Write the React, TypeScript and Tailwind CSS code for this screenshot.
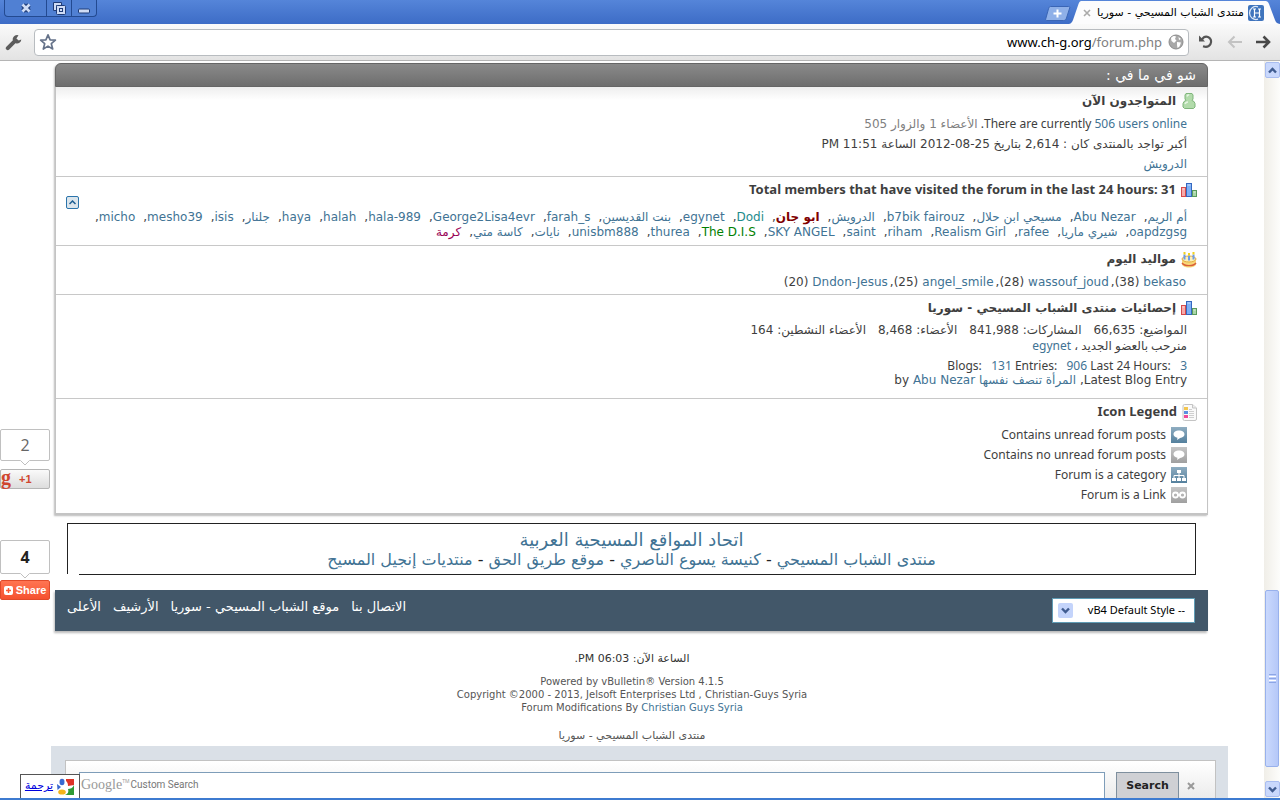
import type { ReactNode } from 'react'

type Member = { name: string; color?: string }

const membersTop: Member[] = [
  { name: 'أم الريم' },
  { name: 'Abu Nezar' },
  { name: 'مسيحي ابن حلال' },
  { name: 'b7bik fairouz' },
  { name: 'الدرويش' },
  { name: 'ابو جان', color: 'font-bold text-[#800000]' },
  { name: 'Dodi', color: 'text-[#1e8c8c]' },
  { name: 'egynet' },
  { name: 'بنت القديسين' },
  { name: 'farah_s' },
  { name: 'George2Lisa4evr' },
  { name: 'hala-989' },
  { name: 'halah' },
  { name: 'haya' },
  { name: 'جلنار' },
  { name: 'isis' },
  { name: 'mesho39' },
  { name: 'micho' },
]

const membersBottom: Member[] = [
  { name: 'oapdzgsg' },
  { name: 'شيري ماريا' },
  { name: 'rafee' },
  { name: 'Realism Girl' },
  { name: 'riham' },
  { name: 'saint' },
  { name: 'SKY ANGEL' },
  { name: 'The D.I.S', color: 'text-[#008000]' },
  { name: 'thurea' },
  { name: 'unisbm888' },
  { name: 'نايات' },
  { name: 'كاسة متي' },
  { name: 'كرمة', color: 'text-[#990055]' },
]

const birthdays = [
  { name: 'bekaso', age: 38 },
  { name: 'wassouf_joud', age: 28 },
  { name: 'angel_smile', age: 25 },
  { name: 'Dndon-Jesus', age: 20 },
]

function A({ children, className = 'text-[#417394]' }: { children: ReactNode; className?: string }) {
  return <a href="#" className={className}>{children}</a>
}

/* ---------- icons ---------- */

function UserIcon() {
  return (
    <svg width="16" height="18" viewBox="0 0 16 18">
      <path d="M5 1.500h6l1 1.500v4l-1 1.500 2 1 1 2v3.500l-1.500 1.500h-9L2 15v-3.500l1-2 2-1L4 7V3z" fill="#b2dbab" stroke="#7fb57b" strokeLinejoin="round" />
      <path d="M6 4.500c.3-1.200 1.200-1.700 2.200-1.700M4 12c.5-1.400 1.500-2 3-2" stroke="#e6f5e3" strokeWidth="1.500" fill="none" />
    </svg>
  )
}

function StatsIcon() {
  return (
    <svg width="16" height="16" viewBox="0 0 16 16">
      <rect x=".5" y="5.500" width="4" height="9" fill="#f6a9a9" stroke="#d64a4a" />
      <rect x="5.500" y="1.500" width="5" height="13" fill="#7db0f5" stroke="#3568c0" />
      <rect x="11.500" y="8.500" width="4" height="6" fill="#a9d6a7" stroke="#5a9a5c" />
      <path d="M1.500 7h2M6.500 3h3M12.500 10h2" stroke="#fff" strokeOpacity=".6" />
    </svg>
  )
}

function CakeIcon() {
  return (
    <svg width="16" height="17" viewBox="0 0 16 17">
      <path d="M1 8v5c0 2 3 3.500 7 3.500s7-1.500 7-3.500V8z" fill="#f8d878" />
      <ellipse cx="8" cy="8" rx="7" ry="3" fill="#fdf0b8" stroke="#e2ad45" />
      <path d="M1 12c1.500 2 4 2.600 7 2.600s5.500-.6 7-2.600" stroke="#d95f3a" strokeWidth="1.400" fill="none" />
      <path d="M3.500 3.500v5M8 4.500v5M12.500 3.500v5" stroke="#6d9be6" strokeWidth="2" />
      <path d="M3.500 1v2.500M8 2v2.500M12.500 1v2.500" stroke="#f3d21d" strokeWidth="2" />
    </svg>
  )
}

function LegendIcon() {
  return (
    <svg width="15" height="17" viewBox="0 0 15 17">
      <path d="M2.500 .5h8L14.500 4v11a1.500 1.500 0 0 1-1.500 1.500H2.500A1.500 1.500 0 0 1 1 15V2A1.500 1.500 0 0 1 2.500 .5z" fill="#fafafa" stroke="#c4c4c4" />
      <path d="M10.500 .5V4h4" fill="#eee" stroke="#c4c4c4" />
      <rect x="2" y="3" width="4" height="3" fill="#f3c64e" />
      <rect x="2" y="7" width="4" height="3" fill="#5a8fe0" />
      <rect x="2" y="11" width="4" height="3" fill="#ef4a9a" />
      <path d="M7 5.500h3M7 7.500h5M7 9.500h5M7 11.500h5M7 13.500h5" stroke="#cfcfcf" />
    </svg>
  )
}

function Tile({ blue, children }: { blue?: boolean; children: ReactNode }) {
  return (
    <svg width="16" height="16" viewBox="0 0 16 16" className={blue ? 'bg-linear-to-b from-[#8fadc1] to-[#54809d]' : 'bg-linear-to-b from-[#c6c6c6] to-[#a0a0a0]'}>
      {children}
    </svg>
  )
}

const bubble = <path d="M8 3.500c3 0 5.500 1.500 5.500 3.800 0 2.100-2 3.500-4.400 3.700L6 13l.5-2.200C4.200 10.300 2.500 9.100 2.500 7.300 2.500 5 5 3.500 8 3.500z" fill="#fff" />

const legend = [
  { label: 'Contains unread forum posts', icon: <Tile blue>{bubble}</Tile> },
  { label: 'Contains no unread forum posts', icon: <Tile>{bubble}</Tile> },
  {
    label: 'Forum is a category',
    icon: (
      <Tile blue>
        <path d="M6 3h4v3H6zM1 11h4v3H1zM6 11h4v3H6zM11 11h4v3h-4z" fill="#fff" />
        <path d="M8 6v5M3 11V8.500h10V11" stroke="#fff" fill="none" />
      </Tile>
    ),
  },
  {
    label: 'Forum is a Link',
    icon: (
      <Tile>
        <circle cx="4.500" cy="8" r="2.500" fill="none" stroke="#fff" strokeWidth="1.800" />
        <circle cx="11.500" cy="8" r="2.500" fill="none" stroke="#fff" strokeWidth="1.800" />
        <path d="M6.500 8h3" stroke="#fff" strokeWidth="1.500" />
      </Tile>
    ),
  },
]

/* ---------- browser window ---------- */

function TitleBar() {
  return (
    <div dir="ltr" className="flex h-6 items-start justify-between bg-linear-to-b from-[#5585d9] to-[#3d6cc6]">
      <div className="ml-1 flex h-[17px] rounded-b border border-t-0 border-[#234a91] bg-[#5080d3]">
        <button aria-label="Close window" className="flex w-[42px] items-center justify-center border-r border-[#234a91]">
          <svg width="12" height="12" viewBox="0 0 12 12">
            <path d="M3 3l6 6M9 3l-6 6" stroke="#1f3c78" strokeWidth="5" />
            <path d="M2.500 2.500l7 7M9.500 2.500l-7 7" stroke="#cfdcf5" strokeWidth="2.600" />
          </svg>
        </button>
        <button aria-label="Restore window" className="flex w-[25px] items-center justify-center border-r border-[#234a91]">
          <svg width="13" height="13" viewBox="0 0 13 13" fill="none">
            <path d="M.5 .5h8v3h-5v5h-3z" fill="#cfdcf5" stroke="#1f3c78" />
            <rect x="3.500" y="3.500" width="9" height="9" rx="1" fill="#cfdcf5" stroke="#1f3c78" />
            <rect x="6.500" y="6.500" width="3" height="3" fill="#cfdcf5" stroke="#1f3c78" />
          </svg>
        </button>
        <button aria-label="Minimize window" className="flex w-[24px] items-center justify-center">
          <svg width="12" height="12" viewBox="0 0 12 12">
            <rect x=".5" y="7" width="11" height="4" rx="1" fill="#cfdcf5" stroke="#1f3c78" />
          </svg>
        </button>
      </div>
      <div className="flex items-end">
        <button aria-label="New tab" className="-mr-0.5 mb-[3px]">
          <svg width="26" height="15" viewBox="0 0 26 15">
            <path d="M5.500 .5h18c1.200 0 1.500.6 1.200 1.500L21.500 12c-.5 1.700-1.300 2.500-3 2.500H2C.800 14.500.400 14 .700 13L3.500 2.800C4 1.200 4.500.5 5.500 .5z" fill="#8fb0e8" stroke="#3a65b5" />
            <path d="M12.500 3.500v8M8.500 7.500h8" stroke="#fff" strokeWidth="2" />
          </svg>
        </button>
        <div className="flex h-6 items-center">
          <svg width="14" height="24" viewBox="0 0 14 24" className="shrink-0">
            <path d="M0 24c2.500-.5 3-2 4-4L9.500 4C10.500 1.500 11 1 14 1v23z" fill="#fcfcfd" />
          </svg>
          <div className="mt-px flex h-[23px] items-center gap-1.5 bg-[#fcfcfd] font-['DejaVu_Sans',sans-serif]">
            <button aria-label="Close tab">
              <svg width="8" height="8" viewBox="0 0 8 8">
                <path d="M1 1l6 6M7 1L1 7" stroke="#aaa" strokeWidth="1.600" />
              </svg>
            </button>
            <span dir="rtl" className="text-[11px] leading-4 whitespace-nowrap text-black">منتدى الشباب المسيحي - سوريا</span>
            <svg width="16" height="16" viewBox="0 0 16 16" className="-ml-0.5">
              <rect width="16" height="16" rx="2" fill="#3f74bd" />
              <path d="M10 1.800A6.500 6.500 0 1 0 10 14.200" fill="none" stroke="#dbe7f7" strokeWidth="1.300" />
              <path d="M6.500 4v8M11.500 4v8M6.500 8h5M5 4h3M10 4h3M5 12h3M10 12h3" stroke="#fff" strokeWidth="1.200" />
            </svg>
          </div>
          <svg width="16" height="24" viewBox="0 0 16 24" className="shrink-0">
            <path d="M0 1c3 0 4 .5 5 3l6 16c.8 2.500 2 3.600 5 4H0z" fill="#fcfcfd" />
          </svg>
        </div>
      </div>
    </div>
  )
}

function Toolbar() {
  return (
    <div dir="ltr" className="flex h-[37px] items-center gap-3 border-b border-[#b5b5b5] bg-linear-to-b from-[#fafafa] to-[#e3e3e3] px-[5px]">
      <button aria-label="Settings">
        <svg width="17" height="17" viewBox="0 0 17 17">
          <path d="M2.800 14.200l6-6" stroke="#5c5c5c" strokeWidth="4" strokeLinecap="round" />
          <path d="M13.500 1.200a4.300 4.300 0 1 0 2.800 4.200l-2.600 1.200-2.300-2.200z" fill="#5c5c5c" />
        </svg>
      </button>
      <div className="flex h-[27px] flex-1 items-center rounded border border-[#b8bcc0] bg-white px-1">
        <button aria-label="Bookmark this page">
          <svg width="18" height="18" viewBox="0 0 18 18">
            <path d="M9 1.800l2.100 5 5.300.4-4.100 3.500 1.400 5.300L9 13.100 4.300 16l1.400-5.300L1.600 7.200l5.300-.4z" fill="#fff" stroke="#66738a" strokeWidth="1.700" strokeLinejoin="round" />
          </svg>
        </button>
        <div className="flex-1 text-right text-[13px] leading-5 text-[#808080]">
          <span className="text-black">www.ch-g.org</span>/forum.php
        </div>
        <svg width="16" height="16" viewBox="0 0 16 16" className="ml-[6px] shrink-0">
          <circle cx="8" cy="8" r="7" fill="#a8a8a8" stroke="#8c8c8c" />
          <path d="M3 4c2-2.500 4-2 5-1.500L7 5l1.500 1.500L6 9 3.500 7zM9 8l4 .5-1.500 4-2 1.500L9 11zM10.500 3l2.500 2-2 1z" fill="#fff" />
        </svg>
      </div>
      <button aria-label="Reload" className="-ml-1">
        <svg width="18" height="18" viewBox="0 0 18 18" fill="none">
          <path d="M5 6.500C6.500 4 9 3 11.500 4.200c2.500 1.300 3.300 4.300 2 6.800-1.300 2.400-4.200 3.300-7.500 2.300" stroke="#555" strokeWidth="2.200" />
          <path d="M2 2.500v6h6z" fill="#555" />
        </svg>
      </button>
      <button aria-label="Forward">
        <svg width="16" height="14" viewBox="0 0 16 14" fill="none" stroke="#c3c3c3" strokeWidth="2">
          <path d="M15 7H2M7.500 1.500L2 7l5.500 5.500" />
        </svg>
      </button>
      <button aria-label="Back" className="mr-1">
        <svg width="16" height="14" viewBox="0 0 16 14" fill="none" stroke="#484848" strokeWidth="2.600">
          <path d="M1 7h13M8.500 1.500L14 7l-5.500 5.500" />
        </svg>
      </button>
    </div>
  )
}

function Chevron({ up }: { up?: boolean }) {
  return (
    <svg width="9" height="7" viewBox="0 0 9 7" fill="none" stroke="#405c90" strokeWidth="2.400">
      <path d={up ? 'M1 5.500L4.500 2 8 5.500' : 'M1 1.500L4.500 5 8 1.500'} />
    </svg>
  )
}

function ScrollBar() {
  return (
    <div className="flex w-4 shrink-0 flex-col items-center bg-linear-to-r from-[#f0eee8] to-[#fdfdfb]">
      <button aria-label="Scroll up" className="mt-px flex h-4 w-[15px] items-center justify-center rounded-xs border border-[#a9bdf0] bg-[#c9d8fc]"><Chevron up /></button>
      <div className="grow-[512]" />
      <div className="flex w-[14px] grow-[166] flex-col items-center justify-center gap-px rounded-xs border border-[#98b1ec] bg-linear-to-r from-[#cad9fd] to-[#b5c8f8]">
        <i className="h-px w-[7px] bg-[#8ca6e6]" />
        <i className="h-px w-[7px] bg-white" />
        <i className="h-px w-[7px] bg-[#8ca6e6]" />
        <i className="h-px w-[7px] bg-white" />
        <i className="h-px w-[7px] bg-[#8ca6e6]" />
      </div>
      <div className="grow-[14]" />
      <button aria-label="Scroll down" className="mb-px flex h-4 w-[15px] items-center justify-center rounded-xs border border-[#a9bdf0] bg-[#c9d8fc]"><Chevron /></button>
    </div>
  )
}

/* ---------- forum ---------- */

function Heading({ icon, latin, children }: { icon: ReactNode; latin?: boolean; children: ReactNode }) {
  return (
    <h2 className="flex h-5 items-center gap-[5px] px-[10px] font-bold">
      {icon}
      <span className={latin ? 'text-[13px]' : "font-['DejaVu_Sans',sans-serif] text-xs"}>{children}</span>
    </h2>
  )
}

function MemberRow({ members, last }: { members: Member[]; last?: boolean }) {
  return (
    <div className="flex gap-2 font-['DejaVu_Sans',sans-serif] leading-[15px] whitespace-nowrap">
      {members.map((m, i) => (
        <span key={m.name} className="flex">
          <A className={m.color}>{m.name}</A>
          {last && i === members.length - 1 ? null : ','}
        </span>
      ))}
    </div>
  )
}

function WhatsGoingOn() {
  return (
    <section className="mr-14 ml-[55px] rounded-t-md border border-b-2 border-[#c4c4c4] bg-white shadow-[-1px_1px_2px_#bbb]">
      <h1 className="-mx-px -mt-px flex h-6 items-center rounded-t-md border border-[#666] bg-linear-to-b from-[#8a8a8a] to-[#6e6e6e] px-[11px] font-['DejaVu_Sans',sans-serif] text-sm leading-5 text-white">
        شو في ما في :
      </h1>

      <div className="border-b border-[#c8c8c8] bg-linear-to-b from-[#eee] to-white to-15% pt-1 pb-[2px]">
        <Heading icon={<UserIcon />}>المتواجدون الآن</Heading>
        <div className="mt-[3px] px-5 leading-5">
          <p>
            There are currently <A>506 users online</A>. <span className="font-['DejaVu_Sans',sans-serif] text-[#808080]">الأعضاء 1 والزوار 505</span>
          </p>
          <p className="font-['DejaVu_Sans',sans-serif]">أكبر تواجد بالمنتدى كان : 2,614 بتاريخ 25-08-2012 الساعة 11:51 PM</p>
          <p><A>الدرويش</A></p>
        </div>
      </div>

      <div className="relative border-b border-[#c8c8c8] pt-[3px] pb-[5px]">
        <Heading icon={<StatsIcon />} latin>Total members that have visited the forum in the last 24 hours: 31</Heading>
        <button aria-label="Collapse" className="absolute top-[19px] left-[10px] flex size-[13px] items-center justify-center rounded-xs border border-[#2b74ab] bg-[#dbe5ec]">
          <svg width="7" height="5" viewBox="0 0 7 5" fill="none" stroke="#1d5f94" strokeWidth="1.500"><path d="M.5 4L3.500 1l3 3" /></svg>
        </button>
        <div className="mt-[10px] px-5">
          <MemberRow members={membersTop} />
          <MemberRow members={membersBottom} last />
        </div>
      </div>

      <div className="border-b border-[#c8c8c8] pt-[3px] pb-[2px]">
        <Heading icon={<CakeIcon />}>مواليد اليوم</Heading>
        <div className="mt-[3px] flex gap-0.5 px-[21px] font-['DejaVu_Sans',sans-serif] leading-5">
          {birthdays.map((b, i) => (
            <span key={b.name} className="flex">
              <A>{b.name}</A>
              <span dir="ltr" className="mr-1">({b.age})</span>
              {i < birthdays.length - 1 && ','}
            </span>
          ))}
        </div>
      </div>

      <div className="border-b border-[#c8c8c8] pt-[3px] pb-[10px]">
        <Heading icon={<StatsIcon />}>إحصائيات منتدى الشباب المسيحي - سوريا</Heading>
        <div className="mt-[5px] px-5 leading-[15px]">
          <div className="flex gap-3 font-['DejaVu_Sans',sans-serif]">
            <span>المواضيع: 66,635</span>
            <span>المشاركات: 841,988</span>
            <span>الأعضاء: 8,468</span>
            <span>الأعضاء النشطين: 164</span>
          </div>
          <p>منرحب بالعضو الجديد ، <A>egynet</A></p>
          <p dir="ltr" className="mt-[5px] text-right">
            Blogs:&nbsp;&nbsp; <A>131</A> Entries:&nbsp;&nbsp; <A>906</A> Last 24 Hours:&nbsp;&nbsp; <A>3</A>
          </p>
          <div className="flex gap-1 font-['DejaVu_Sans',sans-serif]">
            <span>Latest Blog Entry,</span>
            <A>المرأة تنصف نفسها</A>
            <span dir="ltr">by <A>Abu Nezar</A></span>
          </div>
        </div>
      </div>

      <div className="pt-[3px] pb-2">
        <Heading icon={<LegendIcon />} latin>Icon Legend</Heading>
        <ul className="mt-[3px] px-5">
          {legend.map((l) => (
            <li key={l.label} className="flex h-5 items-center gap-[5px]">
              {l.icon}
              {l.label}
            </li>
          ))}
        </ul>
      </div>
    </section>
  )
}

function Union() {
  return (
    <section className="mt-2 mr-[68px] ml-[67px] border-t border-r border-[#222] text-center font-['DejaVu_Sans',sans-serif] text-[#222]">
      <div className="border-l border-[#222] pt-[6px] pb-1">
        <p className="text-lg leading-5"><A>اتحاد المواقع المسيحية العربية</A></p>
        <p className="text-base leading-5">
          <A>منتدى الشباب المسيحي</A> - <A>كنيسة يسوع الناصري</A> - <A>موقع طريق الحق</A> - <A>منتديات إنجيل المسيح</A>
        </p>
      </div>
      <div className="ml-3 h-px bg-[#222]" />
    </section>
  )
}

function FooterBar() {
  return (
    <div className="mt-[15px] mr-14 ml-[55px] flex h-[41px] items-start justify-between bg-[#425769] pr-[13px] pl-3 text-white shadow-[-1px_2px_2px_#bbb]">
      <div className="relative mt-2">
        <select aria-label="Style" className="h-[25px] w-[143px] appearance-none border border-[#5f9cb5] bg-white pr-[9px] text-right text-[11px] text-black">
          <option>-- vB4 Default Style</option>
        </select>
        <span className="pointer-events-none absolute top-[5px] left-[6px] flex size-[15px] items-center justify-center rounded-xs bg-[#c4d4fb]"><Chevron /></span>
      </div>
      <nav className="mt-2 flex gap-3 font-['DejaVu_Sans',sans-serif] text-[13px] leading-[18px]">
        <A className="text-white">الاتصال بنا</A>
        <A className="text-white">موقع الشباب المسيحي - سوريا</A>
        <A className="text-white">الأرشيف</A>
        <A className="text-white">الأعلى</A>
      </nav>
    </div>
  )
}

function SearchDock() {
  return (
    <div className="mt-1 mr-9 ml-[51px] flex min-h-0 flex-1 flex-col bg-[#dae0e7] px-[14px] pt-[14px] pr-3">
      <form dir="ltr" className="flex min-h-7 flex-1 items-start border border-b-0 border-[#c2c2c2] bg-linear-to-b from-white to-[#ececec] pt-[11px] pr-5 pl-[13px]">
        <div className="relative flex-1">
          <input aria-label="Google Custom Search" className="block h-9 w-full border border-[#7e9db9] bg-white" />
          <span className="pointer-events-none absolute top-[3px] left-[2px] flex items-center text-[#999]">
            <span className="font-['Liberation_Serif',serif] text-sm leading-5">Google</span>
            <span className="mb-2 text-[5px] leading-none">TM</span>
            <span className="ml-px font-['Roboto',sans-serif] text-[10px] text-[#777]">Custom Search</span>
          </span>
        </div>
        <button type="button" className="ml-[11px] h-9 w-[63px] border border-[#7e8f9e] bg-[#cfd0d4] pb-2 font-['DejaVu_Sans',sans-serif] text-[11px] font-bold text-[#222]">Search</button>
        <button type="button" aria-label="Close" className="mt-[10px] ml-2">
          <svg width="8" height="8" viewBox="0 0 8 8"><path d="M1 1l6 6M7 1L1 7" stroke="#999" strokeWidth="2" /></svg>
        </button>
      </form>
    </div>
  )
}

/* ---------- floating share buttons ---------- */

function CountBubble({ bold, children }: { bold?: boolean; children: ReactNode }) {
  return (
    <div className="relative">
      <div className={`flex items-center justify-center rounded-xs border border-[#c0c0c0] bg-white text-base ${bold ? 'h-[34px] font-bold text-[#222]' : "h-[32px] font-['Open_Sans',sans-serif] text-[#666]"}`}>{children}</div>
      <svg width="10" height="6" viewBox="0 0 10 6" className="absolute top-full left-5 -mt-px">
        <path d="M0 0h10L5 5z" fill="#fff" />
        <path d="M.5 .5L5 5 9.500 .5" fill="none" stroke="#c0c0c0" />
      </svg>
    </div>
  )
}

function ShareRail() {
  return (
    <aside dir="ltr" className="absolute top-[368px] left-0 w-[50px]">
      <CountBubble>2</CountBubble>
      <button className="mt-2 flex h-5 w-full items-center gap-2 rounded-xs border border-[#b5b5b5] bg-linear-to-b from-[#fafafa] to-[#ddd] font-['Liberation_Sans',sans-serif] text-[11px] font-bold text-[#d0462f]">
        <span className="pb-1 font-['Liberation_Serif',serif] text-xl leading-4">g</span>+1
      </button>
      <div className="mt-[51px]">
        <CountBubble bold>4</CountBubble>
      </div>
      <button className="mt-[6px] flex h-5 w-full items-center justify-center gap-[3px] rounded-xs border border-[#e04a2a] bg-linear-to-b from-[#ff7452] to-[#f5512f] font-['Liberation_Sans',sans-serif] text-[11px] font-bold text-white">
        <svg width="9" height="9" viewBox="0 0 9 9">
          <rect width="9" height="9" rx="2" fill="#fff" />
          <path d="M4.500 2v5M2 4.500h5" stroke="#f85a35" strokeWidth="1.500" />
        </svg>
        Share
      </button>
    </aside>
  )
}

function TranslateBadge() {
  return (
    <div className="absolute bottom-0 left-5 flex h-6 w-[60px] items-center justify-center gap-1 border border-b-0 border-[#555] bg-white">
      <svg width="18" height="18" viewBox="0 0 18 18">
        <path d="M9 1h8v6l-6 1c0-3-1-4-2-5z" fill="#de3326" />
        <path d="M17 7v10H8c3-1 4-3 3-6 2 0 5-1 6-4z" fill="#2f9a34" />
        <ellipse cx="5" cy="4" rx="2.500" ry="3.200" fill="#3a69d0" />
        <path d="M0 6l4 3-3.500 3z" fill="#3a69d0" />
        <ellipse cx="5" cy="14" rx="3.800" ry="2.600" fill="#f4b41a" />
      </svg>
      <A className="font-['DejaVu_Sans',sans-serif] text-[11px] text-[#0000dd] underline">ترجمة</A>
    </div>
  )
}

export default function App() {
  return (
    <div dir="rtl" className="flex h-screen flex-col overflow-hidden border-b-2 border-[#3d7bd0] bg-white font-['Noto_Sans','DejaVu_Sans',sans-serif] text-xs text-[#3e3e3e]">
      <TitleBar />
      <Toolbar />
      <div dir="ltr" className="flex min-h-0 flex-1">
        <div dir="rtl" className="relative flex min-w-0 flex-1 flex-col overflow-hidden pt-[2px]">
          <WhatsGoingOn />
          <Union />
          <FooterBar />
          <footer className="mt-[21px] text-center font-['DejaVu_Sans',sans-serif] text-[10px] leading-[13px] text-[#555]">
            <p className="text-[11px] leading-[13px] text-[#333]">الساعة الآن: 06:03 PM.</p>
            <div dir="ltr" className="mt-[10px]">
              <p>Powered by vBulletin® Version 4.1.5</p>
              <p>Copyright ©2000 - 2013, Jelsoft Enterprises Ltd , Christian-Guys Syria</p>
              <p>Forum Modifications By <A>Christian Guys Syria</A></p>
            </div>
            <p className="mt-[15px] text-[11px] leading-[13px]">منتدى الشباب المسيحي - سوريا</p>
          </footer>
          <SearchDock />
          <ShareRail />
          <TranslateBadge />
        </div>
        <ScrollBar />
      </div>
    </div>
  )
}
